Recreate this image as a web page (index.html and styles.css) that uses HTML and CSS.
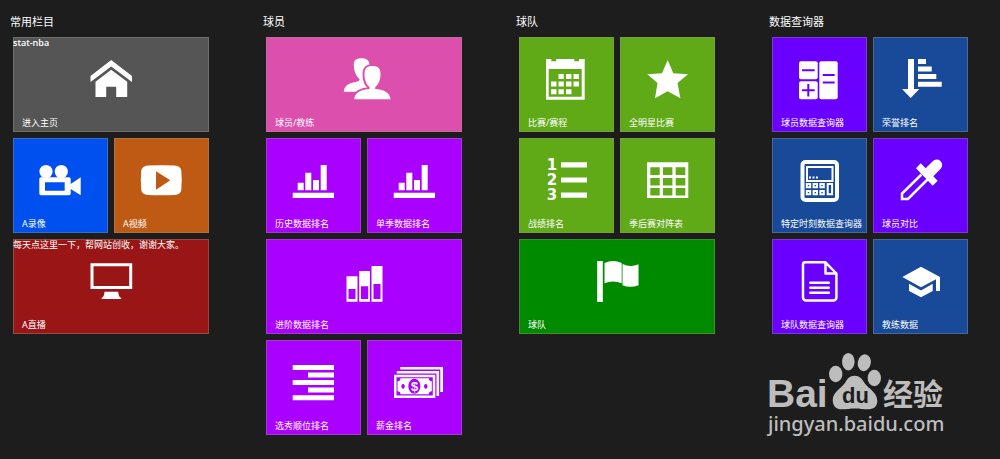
FILE: index.html
```html
<!DOCTYPE html>
<html lang="zh-CN">
<head>
<meta charset="utf-8">
<title>stat-nba</title>
<link rel="stylesheet" href="styles.css">
</head>
<body>
<main class="board">
  <section class="group">
    <h2 class="group-title">常用栏目</h2>
    <div class="tiles">
      <a class="tile wide gray" href="#">
        <span class="note strong">stat-nba</span>
        <svg class="icon" viewBox="0 0 55 55" aria-hidden="true"><path d="M27.2 8 48 24v6L27.2 14.5 6.5 30v-6z"/><path d="M11.5 29.7 27.2 17.8l16 11.9V45h-11V34.7h-10V45H11.5z"/></svg>
        <span class="label">进入主页</span>
      </a>
      <a class="tile blue" href="#">
        <svg class="icon" viewBox="0 0 55 55" aria-hidden="true"><circle cx="13" cy="18.5" r="6.6"/><circle cx="28.3" cy="18.5" r="6.6"/><path fill-rule="evenodd" d="M8 24.3h28a1.7 1.7 0 0 1 1.7 1.7v5l10-6.7v18l-10-6.3v4.6a1.7 1.7 0 0 1-1.7 1.7H8a1.7 1.7 0 0 1-1.7-1.7V26A1.7 1.7 0 0 1 8 24.3zm4 5v8.4h19.7v-8.4z"/></svg>
        <span class="label">A录像</span>
      </a>
      <a class="tile orange" href="#">
        <svg class="icon" viewBox="0 0 55 55" aria-hidden="true"><path fill-rule="evenodd" d="M14 12.6q13.300-.6 26.600 0 6 .4 6.700 5 1 9.700 0 19.400-.7 4.600-6.700 5-13.300.6-26.600 0-6-.4-6.700-5-1-9.700 0-19.400.7-4.600 6.700-5zM22 18.300v18.400l14.300-9.400z"/></svg>
        <span class="label">A视频</span>
      </a>
      <a class="tile wide red" href="#">
        <span class="note">每天点这里一下，帮网站创收，谢谢大家。</span>
        <svg class="icon" viewBox="0 0 55 55" aria-hidden="true"><path fill-rule="evenodd" d="M6.500 9.300h41.700V35H6.500zm3 3V32h35.700V12.300z"/><path d="M20.500 37.700h13.700q.3 5.300 3 6.300v1H17.500v-1q2.700-1 3-6.300z"/></svg>
        <span class="label">A直播</span>
      </a>
    </div>
  </section>

  <section class="group">
    <h2 class="group-title">球员</h2>
    <div class="tiles">
      <a class="tile wide pink" href="#">
        <svg class="icon" viewBox="0 0 55 55" aria-hidden="true"><path d="M24.500 6.300c5.500 0 7.900 2 7.900 7 0 7-2 12-5.400 15v2c0 2 2 2 6 4v5.400H6.800c.5-6 5-8.700 12-9.700 3-.5 3.700-1 3.700-3-3.500-3-5.700-8-5.700-14 0-4.700 2.200-6.700 7.700-6.700z"/><path class="cut" d="M35.500 14c5.700 0 8 2.500 8 8 0 6-2 10.500-5.300 13v2c7.800.4 14.800 3.300 15.300 10.300H17.200c.5-7 7.800-9.900 15.300-10.300v-2c-3.200-2.500-5-7-5-13 0-5.500 2.300-8 8-8z"/></svg>
        <span class="label">球员/教练</span>
      </a>
      <a class="tile purple" href="#">
        <svg class="icon" viewBox="0 0 55 55" aria-hidden="true"><path d="M6.700 39.700H48V45H6.700zM11.700 29.700h6v7.600h-6zM19.300 19.700h6v17.600h-6zM27 27h6v10.300h-6zM34.700 12h6v25.300h-6z"/></svg>
        <span class="label">历史数据排名</span>
      </a>
      <a class="tile purple" href="#">
        <svg class="icon" viewBox="0 0 55 55" aria-hidden="true"><path d="M6.700 39.700H48V45H6.700zM11.700 29.700h6v7.600h-6zM19.300 19.700h6v17.600h-6zM27 27h6v10.300h-6zM34.700 12h6v25.300h-6z"/></svg>
        <span class="label">单季数据排名</span>
      </a>
      <a class="tile wide purple" href="#">
        <svg class="icon" viewBox="0 0 55 55" aria-hidden="true"><path fill-rule="evenodd" d="M9.500 22.300h11v25.400h-11zm2 12.700v10h7V35zM22.200 17h10.700v30.700H22.200zm1.700 15.300V45h7.300V32.300zM34.500 12h11v35.700h-11zm2 18v15h7V30z"/></svg>
        <span class="label">进阶数据排名</span>
      </a>
      <a class="tile purple" href="#">
        <svg class="icon" viewBox="0 0 55 55" aria-hidden="true"><path d="M6.700 10H48v5H6.700zM22 17.400h26v5H22zM6.700 25H48v5H6.700zM22 32.500h26v5H22zM6.700 40.200H48v5H6.700z"/></svg>
        <span class="label">选秀顺位排名</span>
      </a>
      <a class="tile purple" href="#">
        <svg class="icon" viewBox="0 0 55 55" aria-hidden="true"><path d="M13.300 12H56v25h-2.700V14.500h-40zM9.700 15.900h42.400v25h-2.600V18.600H9.700z"/><path fill-rule="evenodd" d="M7 19.700h41.300V43H7zm2.500 2.500v18.300h36.300V22.200z"/><path fill-rule="evenodd" d="M13.500 23.300h28.300q0 3 3 3v10q-3 0-3 3H13.500q0-3-3-3v-10q3 0 3-3zm13.800.5a6 7.500 0 1 0 .1 0zM16 29a1.700 2.400 0 1 0 .1 0zm22.700 0a1.700 2.400 0 1 0 .1 0z"/><text class="currency" x="27.500" y="36" text-anchor="middle">$</text></svg>
        <span class="label">薪金排名</span>
      </a>
    </div>
  </section>

  <section class="group">
    <h2 class="group-title">球队</h2>
    <div class="tiles">
      <a class="tile green" href="#">
        <svg class="icon" viewBox="0 0 55 55" aria-hidden="true"><path fill-rule="evenodd" d="M7 7h5.300v2.300h5V7h18v2.300H40V7h5.700v40.700H7zm2.700 10v27.700h33V17z"/><path d="M19.500 22h5.300v5h-5.300zM27 22h5.500v5H27zM34.500 22H40v5h-5.500zM12 29.600h5.500v5H12zM19.500 29.600h5.300v5h-5.300zM27 29.600h5.500v5H27zM34.500 29.600H40v5h-5.500zM12 37.200h5.500v5H12zM19.500 37.200h5.300v5h-5.300zM27 37.200h5.500v5H27z"/></svg>
        <span class="label">比赛/赛程</span>
      </a>
      <a class="tile green" href="#">
        <svg class="icon" viewBox="0 0 55 55" aria-hidden="true"><path d="m27.700 8 5.600 13.300 14.700 1L37.500 31l2.900 15.300-12.700-7-12.700 7L17.500 31 7.300 22.300l14.700-1z"/></svg>
        <span class="label">全明星比赛</span>
      </a>
      <a class="tile green" href="#">
        <svg class="icon" viewBox="0 0 55 55" aria-hidden="true"><path d="M22 9.300h26v5.200H22zM22 24.400h26v5.200H22zM22 39.600h26v5.200H22z"/><g class="numerals" text-anchor="middle"><text x="13" y="17">1</text><text x="13" y="32">2</text><text x="13" y="47">3</text></g></svg>
        <span class="label">战绩排名</span>
      </a>
      <a class="tile green" href="#">
        <svg class="icon" viewBox="0 0 55 55" aria-hidden="true"><path fill-rule="evenodd" d="M7 9.300h41.300V45H7zm3.300 5V22h9.400v-7.700zm12.700 0V22h9.400v-7.700zm12.700 0V22h9.600v-7.700zM10.300 25v7.400h9.400V25zM23 25v7.400h9.400V25zm12.700 0v7.400h9.600V25zM10.300 35v7.400h9.400V35zM23 35v7.400h9.400V35zm12.700 0v7.400h9.600V35z"/></svg>
        <span class="label">季后赛对阵表</span>
      </a>
      <a class="tile wide forest" href="#">
        <svg class="icon" viewBox="0 0 55 55" aria-hidden="true"><path d="M7.200 7h5.600v41H7.200zM14.500 9q8.500-4 17.200 0v20.300q-8.700-3.600-17.200 0zM32.500 10q8 4 16 .3v21q-8 3-16 0z"/></svg>
        <span class="label">球队</span>
      </a>
    </div>
  </section>

  <section class="group">
    <h2 class="group-title">数据查询器</h2>
    <div class="tiles">
      <a class="tile indigo" href="#">
        <svg class="icon" viewBox="0 0 55 55" aria-hidden="true"><rect x="7" y="9.300" width="18.700" height="18" rx="2"/><rect x="7" y="29.300" width="18.700" height="18" rx="2"/><rect x="27.300" y="9.300" width="18.400" height="38" rx="2"/><path class="etch" d="M10 18.200h12.700M10 38.300h12.700M16.300 32v12.600M30.700 23h12M30.700 30.600h12"/></svg>
        <span class="label">球员数据查询器</span>
      </a>
      <a class="tile navy" href="#">
        <svg class="icon" viewBox="0 0 55 55" aria-hidden="true"><path d="M15 7h6v30h5.300l-8.600 9L9 37h6zM25 7h8v5h-8zM25 14.400h13.700v5H25zM25 22h18.300v5H25zM25 29.700h23.700v5H25z"/></svg>
        <span class="label">荣誉排名</span>
      </a>
      <a class="tile navy" href="#">
        <svg class="icon" viewBox="0 0 55 55" aria-hidden="true"><rect class="line thick" x="10.500" y="9" width="34.500" height="38" rx="3"/><rect class="line fine" x="15" y="14" width="25.500" height="14"/><path d="M17 23.500h2v2h-2zM20.500 23.500h2v2h-2zM24 23.500h2v2h-2z"/><path class="line fine" d="M14.800 31h3.400v3.200h-3.400zM21.600 31H25v3.200h-3.400zM28.400 31h3.400v3.200h-3.400zM14.800 38h3.400v3.200h-3.400zM21.600 38H25v3.200h-3.400zM28.400 38h3.400v3.200h-3.400zM35.700 31h4.400v10.200h-4.400z"/></svg>
        <span class="label">特定时刻数据查询器</span>
      </a>
      <a class="tile indigo" href="#">
        <svg class="icon" viewBox="0 0 55 55" aria-hidden="true"><path d="m23 15.300 4.700-5 5 5 7-7a5 5 0 0 1 8 7.400l-7.400 7.600 4.400 4.400-5 5z"/><path class="line slim" d="M28.500 21.500 9 40.500V46h6l19.500-19.500"/></svg>
        <span class="label">球员对比</span>
      </a>
      <a class="tile indigo" href="#">
        <svg class="icon" viewBox="0 0 55 55" aria-hidden="true"><path class="line slim round" d="M13 8.300h20.500L44.400 19.500v24a3 3 0 0 1-3 3H14a3 3 0 0 1-3-3v-33q0-2.200 2-2.200zM33.500 8.300v11.200h10.900M18.300 28.700h18.500M18.300 33.700h18.500M18.300 38.700h18.500"/></svg>
        <span class="label">球队数据查询器</span>
      </a>
      <a class="tile navy" href="#">
        <svg class="icon" viewBox="0 0 55 55" aria-hidden="true"><path d="m28 12.700 19 10.300v14h-4V25.200l-15 8.100L9.300 23z"/><path d="m16 29.700 12 6.700 11.700-6.700V37L28 43.300 16 37z"/></svg>
        <span class="label">教练数据</span>
      </a>
    </div>
  </section>
</main>

<svg class="watermark" viewBox="0 0 184 90" role="img" aria-label="Baidu 经验">
  <ellipse cx="69.700" cy="24" rx="6.700" ry="8.300"/>
  <ellipse cx="82.300" cy="11.700" rx="6.300" ry="8.700"/>
  <ellipse cx="98.300" cy="12.700" rx="6.500" ry="8.500" transform="rotate(12 98.300 12.700)"/>
  <ellipse cx="108.300" cy="28" rx="6.700" ry="8.300"/>
  <path d="M88.500 25.700c5 0 7.500 3 10 7.300 3 5 12.800 9 12.800 18 0 6-4.300 8.300-9.300 8.300-5 0-8-.8-13-.8s-8 .8-13 .8c-6 0-9.300-3.300-9.300-9.300 0-8 8.800-12 12.300-17 2.500-4.300 4.500-7.300 9.500-7.300z"/>
  <text class="brand" x="1" y="57">Bai</text>
  <text class="brand-inner" x="76" y="53">du</text>
  <text class="brand-cjk" x="117" y="55">经验</text>
  <text class="site" x="2" y="81">jingyan.baidu.com</text>
</svg>
</body>
</html>
```
FILE: styles.css
```css
* {
  box-sizing: border-box;
}

body {
  position: relative;
  min-height: 100vh;
  margin: 0;
  background: #1d1d1d;
  color: #fff;
  font-family: "Noto Sans", "Noto Sans CJK SC", sans-serif;
}

.board {
  display: flex;
  gap: 57px;
  padding: 13px 13px 24px;
}

.group {
  flex: none;
}

.group-title {
  margin: 0 0 8px -3px;
  font-size: 11px;
  font-weight: 400;
  line-height: 16px;
  font-family: "Noto Sans CJK SC", sans-serif;
}

.tiles {
  display: grid;
  grid-template-columns: repeat(2, 95px);
  grid-auto-rows: 95px;
  gap: 6px;
}

.tile {
  position: relative;
  display: flex;
  flex-direction: column;
  align-items: center;
  justify-content: space-between;
  padding: 14px 8px 2px;
  border: 1px solid rgba(150, 150, 130, 0.4);
  background: var(--tile);
  color: #fff;
  text-decoration: none;
}

.wide {
  grid-column: span 2;
}

.gray { --tile: #555; }
.blue { --tile: #0050ef; }
.orange { --tile: #bf5a15; }
.red { --tile: #9a1616; }
.pink { --tile: #dc4fad; }
.purple { --tile: #a0f; }
.green { --tile: #60a917; }
.forest { --tile: #008a00; }
.indigo { --tile: #6a00ff; }
.navy { --tile: #184a99; }

.label,
.note {
  font-size: 9px;
  line-height: 12px;
  white-space: nowrap;
}

.label {
  align-self: flex-start;
}

.note {
  position: absolute;
  top: -1px;
  left: -1px;
}

.strong {
  font-family: "Open Sans", "Noto Sans", sans-serif;
  font-weight: 600;
}

.icon {
  flex: none;
  width: 55px;
  height: 55px;
  overflow: visible;
  fill: #fff;
}

.cut {
  stroke: var(--tile);
  stroke-width: 4;
  paint-order: stroke;
}

.etch {
  fill: none;
  stroke: var(--tile);
  stroke-width: 2;
}

.line {
  fill: none;
  stroke: #fff;
  stroke-width: 3;
}

.thick { stroke-width: 4; }
.fine { stroke-width: 2; }
.slim { stroke-width: 2.5; }

.round {
  stroke-linecap: round;
  stroke-linejoin: round;
}

.currency {
  font: 700 13px "Liberation Sans", sans-serif;
}

.numerals {
  font: 700 15px "DejaVu Sans", sans-serif;
}

.watermark {
  position: absolute;
  right: 50px;
  bottom: 19px;
  width: 184px;
  height: 90px;
  fill: #bdbdbd;
}

.brand {
  font: 700 39px "Liberation Sans", sans-serif;
}

.brand-inner {
  fill: #1d1d1d;
  font: 700 22px "Liberation Sans", sans-serif;
}

.brand-cjk {
  font: 700 30px "Noto Sans CJK SC", sans-serif;
}

.site {
  font: 500 20px "Noto Sans", sans-serif;
}
```
